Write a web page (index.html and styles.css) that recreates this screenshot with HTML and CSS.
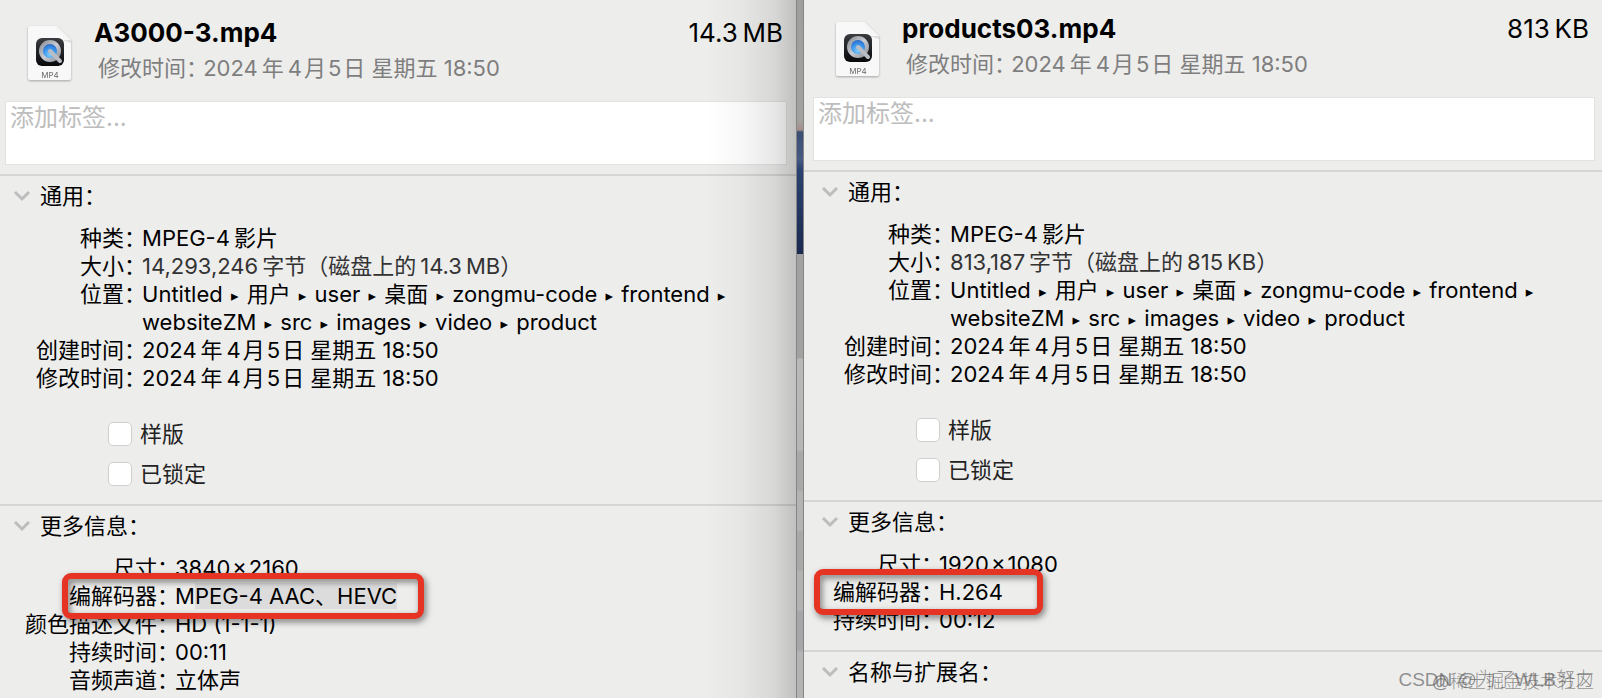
FILE: index.html
```html
<!DOCTYPE html>
<html lang="zh-CN">
<head>
  <meta charset="utf-8">
  <meta name="viewport" content="width=device-width">
  <title>文件简介</title>
  <link rel="stylesheet" href="styles.css">
</head>
<body>

<!-- shared file icon -->
<svg class="defs" width="0" height="0" aria-hidden="true">
  <defs>
    <linearGradient id="silver" x1="0" y1="0" x2="1" y2="1">
      <stop offset="0" stop-color="#8e9299"/>
      <stop offset="0.5" stop-color="#c9ccd2"/>
      <stop offset="1" stop-color="#8f939a"/>
    </linearGradient>
    <radialGradient id="blue" cx="0.5" cy="0.7" r="0.7">
      <stop offset="0" stop-color="#7fd0fb"/>
      <stop offset="0.5" stop-color="#3b94ea"/>
      <stop offset="1" stop-color="#2257b8"/>
    </radialGradient>
    <linearGradient id="tile" x1="0" y1="0" x2="0" y2="1">
      <stop offset="0" stop-color="#3a3c40"/>
      <stop offset="1" stop-color="#08090b"/>
    </linearGradient>
    <linearGradient id="fold" x1="0" y1="1" x2="1" y2="0">
      <stop offset="0" stop-color="#ffffff"/>
      <stop offset="0.5" stop-color="#f4f4f4"/>
      <stop offset="1" stop-color="#dddddd"/>
    </linearGradient>
    <symbol id="mp4" viewBox="0 0 46 58">
      <path d="M3 1H30L44 15V53Q44 55 42 55H3Q1 55 1 53V3Q1 1 3 1Z" fill="#f8f8f8"/>
      <path d="M29 1L44 15H31Q29 15 29 13Z" fill="url(#fold)"/>
      <path d="M30 15H44L44 18Q37 15 30 15Z" fill="#dedede"/>
      <rect x="9" y="13" width="28" height="28" rx="6" fill="url(#tile)"/>
      <circle cx="23" cy="26" r="9" fill="url(#blue)" stroke="url(#silver)" stroke-width="4"/>
      <path d="M23 26L33 36" stroke="#b9bcc3" stroke-width="4" stroke-linecap="round"/>
      <text x="23" y="53" text-anchor="middle" font-size="8" fill="#6a6a6a">MP4</text>
    </symbol>
  </defs>
</svg>

<div class="desk">
  <section class="panel panel-left">
    <header class="file-head">
      <svg class="file-icon" width="46" height="58" role="img" aria-label="MP4"><use href="#mp4"/></svg>
      <div class="file-title">
        <h1>A3000-3.mp4</h1>
        <p>修改时间： 2024&#8201;年&#8201;4&#8202;月&#8202;5&#8202;日 星期五 18:50</p>
      </div>
      <span class="file-size">14.3&#8201;MB</span>
    </header>
    <textarea class="tags" aria-label="标签" placeholder="添加标签..."></textarea>

    <details open>
      <summary><svg class="chevron" width="18" height="12" viewBox="0 0 18 12"><path d="M2 2L9 9L16 2"/></svg>通用：</summary>
      <dl class="info general">
        <div><dt>种类：</dt><dd>MPEG-4&#8201;影片</dd></div>
        <div><dt>大小：</dt><dd class="soft">14,293,246&#8201;字节（磁盘上的&#8201;14.3&#8201;MB）</dd></div>
        <div><dt>位置：</dt><dd>Untitled <i>▸</i> 用户 <i>▸</i> user <i>▸</i> 桌面 <i>▸</i> zongmu-code <i>▸</i> frontend <i>▸</i><br>websiteZM <i>▸</i> src <i>▸</i> images <i>▸</i> video <i>▸</i> product</dd></div>
        <div><dt>创建时间：</dt><dd>2024&#8201;年&#8201;4&#8202;月&#8202;5&#8202;日 星期五 18:50</dd></div>
        <div><dt>修改时间：</dt><dd>2024&#8201;年&#8201;4&#8202;月&#8202;5&#8202;日 星期五 18:50</dd></div>
      </dl>
      <div class="checks">
        <label><input type="checkbox">样版</label>
        <label><input type="checkbox">已锁定</label>
      </div>
    </details>

    <details open>
      <summary><svg class="chevron" width="18" height="12" viewBox="0 0 18 12"><path d="M2 2L9 9L16 2"/></svg>更多信息：</summary>
      <dl class="info more">
        <div><dt>尺寸：</dt><dd>3840&#8202;×&#8202;2160</dd></div>
        <div class="codec"><dt><span class="mark mark-wide"></span>编解码器：</dt><dd>M<span class="selected">PEG-4 AAC、HEVC</span></dd></div>
        <div><dt>颜色描述文件：</dt><dd>HD (1-1-1)</dd></div>
        <div><dt>持续时间：</dt><dd>00:11</dd></div>
        <div><dt>音频声道：</dt><dd>立体声</dd></div>
      </dl>
    </details>
  </section>

  <div class="gap"></div>

  <section class="panel panel-right">
    <header class="file-head">
      <svg class="file-icon" width="46" height="58" role="img" aria-label="MP4"><use href="#mp4"/></svg>
      <div class="file-title">
        <h1>products03.mp4</h1>
        <p>修改时间： 2024&#8201;年&#8201;4&#8202;月&#8202;5&#8202;日 星期五 18:50</p>
      </div>
      <span class="file-size">813&#8201;KB</span>
    </header>
    <textarea class="tags" aria-label="标签" placeholder="添加标签..."></textarea>

    <details open>
      <summary><svg class="chevron" width="18" height="12" viewBox="0 0 18 12"><path d="M2 2L9 9L16 2"/></svg>通用：</summary>
      <dl class="info general">
        <div><dt>种类：</dt><dd>MPEG-4&#8201;影片</dd></div>
        <div><dt>大小：</dt><dd class="soft">813,187&#8201;字节（磁盘上的&#8201;815&#8201;KB）</dd></div>
        <div><dt>位置：</dt><dd>Untitled <i>▸</i> 用户 <i>▸</i> user <i>▸</i> 桌面 <i>▸</i> zongmu-code <i>▸</i> frontend <i>▸</i><br>websiteZM <i>▸</i> src <i>▸</i> images <i>▸</i> video <i>▸</i> product</dd></div>
        <div><dt>创建时间：</dt><dd>2024&#8201;年&#8201;4&#8202;月&#8202;5&#8202;日 星期五 18:50</dd></div>
        <div><dt>修改时间：</dt><dd>2024&#8201;年&#8201;4&#8202;月&#8202;5&#8202;日 星期五 18:50</dd></div>
      </dl>
      <div class="checks">
        <label><input type="checkbox">样版</label>
        <label><input type="checkbox">已锁定</label>
      </div>
    </details>

    <details open>
      <summary><svg class="chevron" width="18" height="12" viewBox="0 0 18 12"><path d="M2 2L9 9L16 2"/></svg>更多信息：</summary>
      <dl class="info more">
        <div><dt>尺寸：</dt><dd>1920&#8202;×&#8202;1080</dd></div>
        <div class="codec"><dt><span class="mark mark-short"></span>编解码器：</dt><dd>H.264</dd></div>
        <div><dt>持续时间：</dt><dd>00:12</dd></div>
      </dl>
    </details>

    <details>
      <summary><svg class="chevron" width="18" height="12" viewBox="0 0 18 12"><path d="M2 2L9 9L16 2"/></svg>名称与扩展名：</summary>
    </details>
  </section>

  <span class="watermark watermark-back">@稀土掘金技术社区</span>
  <span class="watermark">CSDN @为了WLB努力</span>
</div>

</body>
</html>
```
FILE: styles.css
```css
* {
  box-sizing: border-box;
}

body {
  margin: 0;
  font-family: Inter, "Noto Sans CJK SC", sans-serif;
  font-size: 22px;
  line-height: 28px;
  color: #000;
  background: #ededec;
}

.defs {
  position: absolute;
}

.desk {
  position: relative;
  display: grid;
  grid-template-columns: calc(50% - 5px) 8px 1fr;
  min-height: 100vh;
  overflow: hidden;
}

.panel {
  position: relative;
  min-width: 0;
  background: #ededec;
}

.panel-left {
  padding-top: 15px;
}

/* shadow thrown by the window on the right */
.panel-left::after {
  content: "";
  position: absolute;
  top: 0;
  right: 0;
  bottom: 0;
  width: 90px;
  background: linear-gradient(to right, rgba(0,0,0,0), rgba(0,0,0,.03) 40%, rgba(0,0,0,.09) 75%, rgba(0,0,0,.19));
  pointer-events: none;
}

.panel-right {
  padding-top: 11px;
}

.panel-right > * {
  padding-left: 4px;
}

.gap {
  border-left: 1px solid #858585;
  border-right: 1px solid #858585;
  background: linear-gradient(#a09f9c, #a3a2a0 120px, #a58f8a 130px, #3a4d73 132px, #465980 160px, #2a4270 170px, #1b2a50 254px, #a2a2a2 254px, #a2a2a2 358px, #b9b9b9 359px, #b6b6b6 450px, #a9a9a9 452px, #a9a9a9 490px, #b4b4b4 492px, #b4b4b4 530px, #a9a9a9 532px, #a9a9a9 570px, #b2b2b2 572px, #b2b2b2 610px, #a5a6aa 612px, #a5a6aa 650px, #b4b4b4 652px);
}

.file-head {
  display: flex;
  align-items: flex-start;
  height: 86px;
}

.file-icon {
  flex: none;
  margin: 10px 21px 0 27px;
  filter: drop-shadow(0 1px 1px rgba(0,0,0,.3));
}

.file-title {
  flex: 1;
}

.file-title h1 {
  margin: 0;
  font-size: 26px;
  line-height: 36px;
  font-weight: 700;
}

.file-title p {
  margin: 3px 0 0 4px;
  color: #7e7e7e;
  font-feature-settings: "halt";
}

.file-size {
  padding-right: 13px;
  font-size: 26px;
  line-height: 36px;
}

.tags {
  display: block;
  width: calc(100% - 14px);
  height: 64px;
  margin: 0 9px 9px 5px;
  padding: 2px 4px;
  border: 1px solid #e2e2e1;
  border-radius: 0;
  outline: 0;
  resize: none;
  font: inherit;
  font-size: 24px;
  background: #fff;
}

.panel-right .tags {
  width: calc(100% - 16px);
  margin-left: 9px;
}

.tags::placeholder {
  color: #bdbdbd;
}

details {
  border-top: 2px solid #d5d5d4;
}

summary {
  display: flex;
  align-items: center;
  height: 40px;
  padding-left: 13px;
  list-style: none;
  font-feature-settings: "halt";
}

.chevron {
  flex: none;
  margin-right: 9px;
}

.chevron path {
  fill: none;
  stroke: #bdbdbd;
  stroke-width: 3;
}

.info {
  display: grid;
  grid-template-columns: auto 1fr;
  column-gap: 7px;
  margin: 8px 0 0;
}

.info > div {
  display: grid;
  grid-template-columns: subgrid;
  grid-column: 1 / -1;
}

.general {
  padding-left: 36px;
}

.more {
  padding-left: 25px;
}

.panel-right .more {
  padding-bottom: 16px;
}

dt {
  text-align: right;
  font-feature-settings: "halt";
}

dd {
  margin: 0;
  white-space: nowrap;
}

dd i {
  margin: 0 2px;
  font: normal 15px "DejaVu Sans", sans-serif;
  vertical-align: 1px;
  line-height: 1;
}

.soft {
  color: #333;
}

.selected {
  background: #dcdcdc;
}

.checks {
  display: flex;
  flex-direction: column;
  gap: 12px;
  padding: 28px 0 16px 108px;
  color: #222;
}

.checks label {
  display: flex;
  align-items: center;
  gap: 8px;
}

.checks input {
  appearance: none;
  width: 24px;
  height: 24px;
  margin: 0;
  border: 1px solid #cfcfcf;
  border-radius: 5px;
  background: #fff;
}

/* red frame round the codec row */
.codec {
  position: relative;
}

.mark {
  position: absolute;
  z-index: 1;
  top: -9px;
  height: 46px;
  border: 6px solid #e63424;
  border-radius: 9px;
  filter: drop-shadow(2px 3px 3px rgba(0,0,0,.5));
}

.mark-wide {
  left: 37px;
  width: 362px;
}

.mark-short {
  left: -19px;
  width: 229px;
}

.watermark {
  position: absolute;
  right: 8px;
  bottom: 4px;
  font-family: "Liberation Sans", "Noto Sans CJK SC", sans-serif;
  font-size: 19px;
  font-weight: 300;
  color: rgba(80,80,80,.6);
}

.watermark-back {
  font-size: 18px;
  bottom: 2px;
}
```
